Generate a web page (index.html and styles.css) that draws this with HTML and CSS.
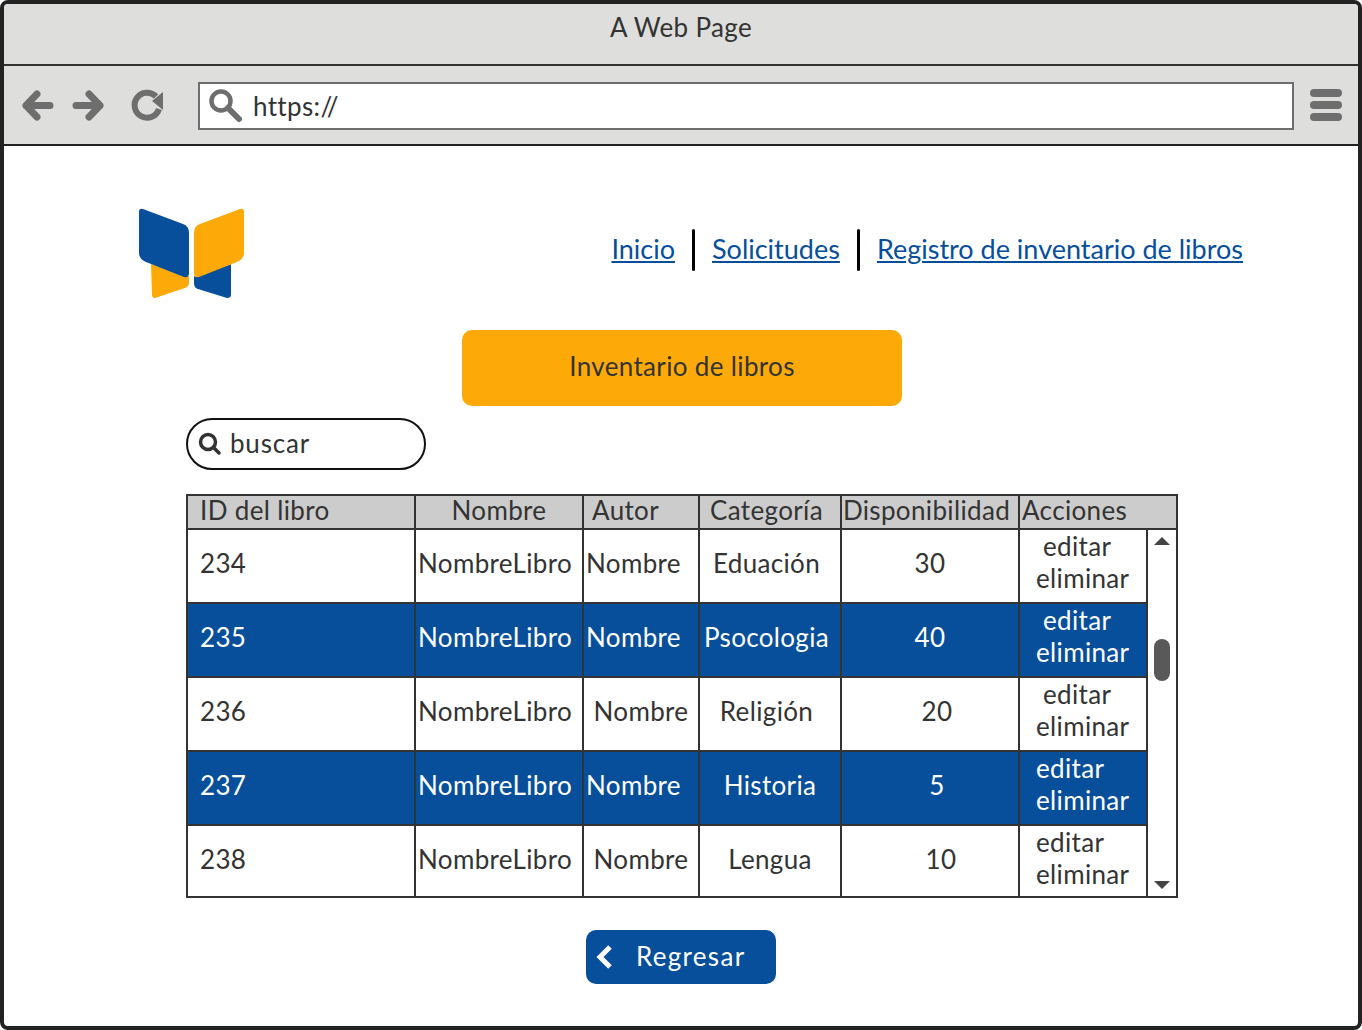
FILE: index.html
```html
<!DOCTYPE html>
<html lang="es">
<head>
    <meta charset="UTF-8">
    <title>Inventario de libros</title>
    <link rel="stylesheet" href="styles.css">
</head>
<body>
<div class="window">
    <div class="titlebar">A Web Page</div>
    <div class="toolbar">
        <svg class="nav-icons" width="150" height="40" viewBox="0 0 150 40">
            <path d="M32 19.500H8M19 8 8 19.500 19 31" />
            <path d="M58 19.500H82M71 8 82 19.500 71 31" />
            <path class="ring" d="M138 10.500A12.500 12.500 0 1 0 141 23" />
            <path class="fill" d="M145 6V24L134 15Z" />
        </svg>
        <div class="urlbar">
            <svg width="40" height="40" viewBox="0 0 40 40">
                <circle cx="12" cy="15" r="9.500" class="glass" />
                <path d="M19 22 30 33" class="glass handle" />
            </svg>
            <span class="url">https://</span>
        </div>
        <div class="burger"><i></i><i></i><i></i></div>
    </div>

    <div class="content">
        <header class="head">
            <svg class="logo" width="106" height="90" viewBox="0 0 106 90">
                <path class="yellow" d="M13 56 47 68Q51 69 51 67V75Q51 78 47 80L17 90Q14 90 14 87Z" />
                <path class="blue" d="M93 56 58 69Q56 69 56 67V75Q56 80 60 81L89 90Q93 90 93 87Z" />
                <path class="blue" d="M1 4Q1 0 5 1L45 16Q51 18 51 25V65Q51 70 46 69L8 54Q1 51 1 45Z" />
                <path class="yellow" d="M106 4Q106 0 102 1L62 16Q56 18 56 25V65Q56 70 61 69L99 54Q106 51 106 45Z" />
            </svg>
            <nav class="links">
                <a href="#">Inicio</a>
                <span class="sep"></span>
                <a href="#">Solicitudes</a>
                <span class="sep"></span>
                <a href="#">Registro de inventario de libros</a>
            </nav>
        </header>

        <div class="banner">Inventario de libros</div>

        <div class="search">
            <svg width="24" height="24" viewBox="0 0 24 24">
                <circle cx="10" cy="10" r="7.500" />
                <path d="M15.500 15.500 21 21" />
            </svg>
            <span>buscar</span>
        </div>

        <div class="table">
            <div class="row header">
                <div class="cell left pad-id">ID del libro</div>
                <div class="cell center">Nombre</div>
                <div class="cell left pad-autor">Autor</div>
                <div class="cell center nudge">Categoría</div>
                <div class="cell center nudge">Disponibilidad</div>
                <div class="cell left">Acciones</div>
            </div>
            <div class="body">
                <div class="rows">
                    <div class="row">
                        <div class="cell left pad-id">234</div>
                        <div class="cell left">NombreLibro</div>
                        <div class="cell left">Nombre</div>
                        <div class="cell center nudge">Eduación</div>
                        <div class="cell center">30</div>
                        <div class="cell actions"><span class="indent">editar</span><span>eliminar</span></div>
                    </div>
                    <div class="row on">
                        <div class="cell left pad-id">235</div>
                        <div class="cell left">NombreLibro</div>
                        <div class="cell left">Nombre</div>
                        <div class="cell center nudge">Psocologia</div>
                        <div class="cell center">40</div>
                        <div class="cell actions"><span class="indent">editar</span><span>eliminar</span></div>
                    </div>
                    <div class="row">
                        <div class="cell left pad-id">236</div>
                        <div class="cell left">NombreLibro</div>
                        <div class="cell center">Nombre</div>
                        <div class="cell center nudge">Religión</div>
                        <div class="cell center shift">20</div>
                        <div class="cell actions"><span class="indent">editar</span><span>eliminar</span></div>
                    </div>
                    <div class="row on">
                        <div class="cell left pad-id">237</div>
                        <div class="cell left">NombreLibro</div>
                        <div class="cell left">Nombre</div>
                        <div class="cell center">Historia</div>
                        <div class="cell center shift">5</div>
                        <div class="cell actions"><span>editar</span><span>eliminar</span></div>
                    </div>
                    <div class="row last">
                        <div class="cell left pad-id">238</div>
                        <div class="cell left">NombreLibro</div>
                        <div class="cell center">Nombre</div>
                        <div class="cell center">Lengua</div>
                        <div class="cell center shift2">10</div>
                        <div class="cell actions"><span>editar</span><span>eliminar</span></div>
                    </div>
                </div>
                <div class="scroll">
                    <span class="arrow up"></span>
                    <span class="thumb"></span>
                    <span class="arrow down"></span>
                </div>
            </div>
        </div>

        <button class="back">
            <svg width="20" height="26" viewBox="0 0 20 26"><path d="M15 3 5 13 15 23" /></svg>
            <span>Regresar</span>
        </button>
    </div>
</div>
</body>
</html>
```

FILE: styles.css
```css
* {
    margin: 0;
    padding: 0;
    box-sizing: border-box;
}

html, body {
    width: 1362px;
    height: 1030px;
    overflow: hidden;
    background: #fff;
}

body {
    font-family: "Lato", "Noto Sans", sans-serif;
    font-size: 26px;
    letter-spacing: 0.35px;
    color: #333;
}

.window {
    width: 1362px;
    height: 1030px;
    border: 4px solid #222;
    border-radius: 8px;
    overflow: hidden;
    display: flex;
    flex-direction: column;
}

.titlebar {
    height: 62px;
    background: #dededc;
    border-bottom: 2px solid #333;
    text-align: center;
    line-height: 46px;
}

.toolbar {
    height: 80px;
    background: #dededc;
    border-bottom: 2px solid #222;
    display: flex;
    align-items: center;
    padding: 2px 16px 0 14px;
    flex-shrink: 0;
}

.nav-icons {
    flex-shrink: 0;
    margin-right: 30px;
}

.nav-icons path {
    fill: none;
    stroke: #6e6e6e;
    stroke-width: 7;
    stroke-linecap: round;
    stroke-linejoin: round;
}

.nav-icons .ring {
    stroke-width: 6;
    stroke-linecap: butt;
}

.nav-icons .fill {
    fill: #6e6e6e;
    stroke: none;
}

.urlbar {
    width: 1096px;
    height: 48px;
    background: #fff;
    border: 2px solid #6e6e6e;
    display: flex;
    align-items: center;
    padding-left: 9px;
}

.urlbar svg {
    margin-top: -1px;
}

.glass {
    fill: none;
    stroke: #6e6e6e;
    stroke-width: 4.5;
}

.handle {
    stroke-width: 6;
    stroke-linecap: round;
}

.url {
    margin: 0 0 0 4px;
}

.burger {
    margin: -2px 0 0 16px;
    width: 32px;
    display: flex;
    flex-direction: column;
    gap: 4px;
}

.burger i {
    height: 8px;
    border-radius: 4px;
    background: #6e6e6e;
}

.content {
    flex: 1;
    display: flex;
    flex-direction: column;
    align-items: flex-start;
}

.head {
    width: 100%;
    display: flex;
    justify-content: space-between;
    align-items: flex-start;
    padding: 62px 115px 0 134px;
}

.blue {
    fill: #074f9b;
}

.yellow {
    fill: #fdaa08;
}

.links {
    display: flex;
    align-items: center;
    gap: 17px;
    margin-top: 21px;
    font-size: 27px;
    letter-spacing: 0;
}

.links a {
    color: #074f9b;
    text-decoration: underline;
    margin-top: -3px;
}

.sep {
    width: 3px;
    height: 42px;
    background: #000;
    border-radius: 2px;
}

.banner {
    align-self: flex-start;
    width: 440px;
    height: 76px;
    margin: 32px 0 0 458px;
    padding-bottom: 4px;
    background: #fdaa08;
    border-radius: 10px;
    display: flex;
    align-items: center;
    justify-content: center;
}

.search {
    width: 240px;
    height: 52px;
    margin: 12px 0 0 182px;
    background: #fff;
    border: 2px solid #111;
    border-radius: 26px;
    display: flex;
    align-items: center;
    gap: 8px;
    padding-left: 10px;
    letter-spacing: 0.8px;
}

.search span {
    margin-top: -3px;
}

.search svg {
    fill: none;
    stroke: #333;
    stroke-width: 3.5;
    stroke-linecap: round;
}

.table {
    width: 992px;
    margin: 24px 0 0 182px;
    border: 2px solid #333;
}

.row {
    display: grid;
    grid-template-columns: 226px 168px 116px 142px 178px 128px;
    height: 74px;
    border-bottom: 2px solid #333;
}

.header {
    height: 34px;
    background: #ccc;
    grid-template-columns: 226px 168px 116px 142px 178px 1fr;
}

.body {
    display: flex;
}

.rows {
    width: 958px;
}

.row.on {
    background: #074f9b;
    color: #fff;
}

.row.last {
    height: 70px;
    border-bottom: 0;
}

.cell {
    display: flex;
    align-items: center;
    border-left: 2px solid #333;
    padding-bottom: 6px;
    white-space: nowrap;
}

.cell:first-child {
    border-left: 0;
}

.center {
    justify-content: center;
}

.left {
    padding-left: 2px;
}

.left.pad-id {
    padding-left: 12px;
}

.left.pad-autor {
    padding-left: 8px;
}

.header .cell {
    line-height: 26px;
    padding-bottom: 4px;
}

.last .cell {
    padding-bottom: 4px;
}

.nudge {
    padding-right: 7px;
}

.shift {
    padding-left: 14px;
}

.shift2 {
    padding-left: 22px;
}

.actions {
    flex-direction: column;
    align-items: flex-start;
    justify-content: center;
    padding-left: 16px;
    line-height: 32px;
}

.row .actions {
    padding-bottom: 8px;
}

.row.last .actions {
    padding-bottom: 6px;
}

.actions span {
    display: block;
}

.actions .indent {
    margin-left: 7px;
}

.scroll {
    flex: 1;
    position: relative;
    border-left: 2px solid #333;
    display: flex;
    flex-direction: column;
    justify-content: space-between;
    align-items: center;
    padding: 7px 0;
}

.arrow {
    width: 0;
    height: 0;
    border-left: 8px solid transparent;
    border-right: 8px solid transparent;
}

.arrow.up {
    border-bottom: 8px solid #444;
}

.arrow.down {
    border-top: 8px solid #444;
}

.thumb {
    position: absolute;
    top: 109px;
    left: 6px;
    width: 16px;
    height: 42px;
    border-radius: 8px;
    background: #595959;
}

.back {
    width: 190px;
    height: 54px;
    margin: 32px 0 0 582px;
    border: 0;
    border-radius: 10px;
    background: #074f9b;
    color: #fff;
    font: inherit;
    letter-spacing: 1.3px;
    display: flex;
    align-items: center;
    padding-left: 9px;
    gap: 21px;
}

.back svg {
    fill: none;
    stroke: #fff;
    stroke-width: 5;
}

.back span {
    margin-top: -3px;
}
```
